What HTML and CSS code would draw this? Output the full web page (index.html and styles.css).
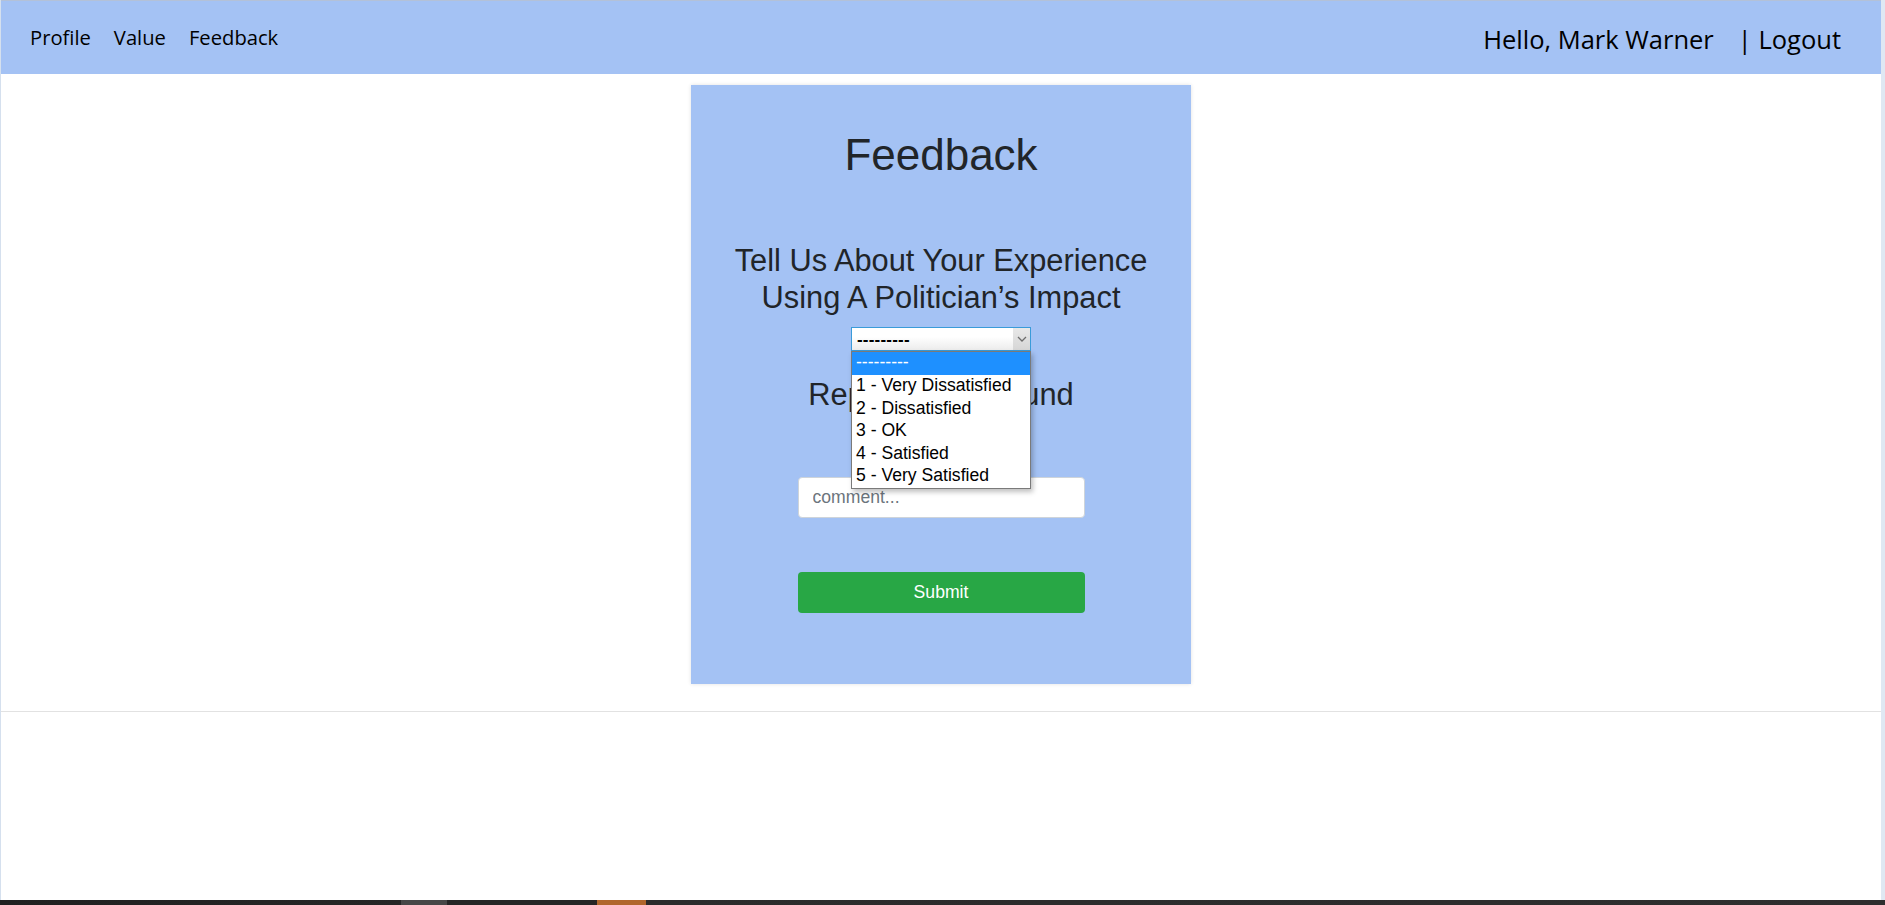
FILE: index.html
```html
<!DOCTYPE html>
<html lang="en">
<head>
<meta charset="utf-8">
<title>Feedback</title>
<link rel="stylesheet" href="styles.css">
</head>
<body>
<div class="screen">
  <div class="window">
    <div class="page">
      <nav class="topnav">
        <div class="nav-left">
          <a class="nav-link" href="#">Profile</a>
          <a class="nav-link" href="#">Value</a>
          <a class="nav-link" href="#">Feedback</a>
        </div>
        <div class="nav-right">
          <span class="greeting">Hello, Mark Warner</span>
          <a class="logout" href="#">| Logout</a>
        </div>
      </nav>
      <main class="main">
        <form class="card">
          <h1 class="card-title">Feedback</h1>
          <h2 class="question">Tell Us About Your Experience<br>Using A Politician’s Impact</h2>
          <div class="select-wrap">
            <div class="select select-open">
              <span class="select-value">---------</span>
              <span class="select-arrow">
                <svg width="10" height="6" viewBox="0 0 10 6"><path d="M1 1 L5 5 L9 1" fill="none" stroke="#6d6d6d" stroke-width="1.3"/></svg>
              </span>
            </div>
            <ul class="listbox">
              <li class="option option-active">---------</li>
              <li class="option">1 - Very Dissatisfied</li>
              <li class="option">2 - Dissatisfied</li>
              <li class="option">3 - OK</li>
              <li class="option">4 - Satisfied</li>
              <li class="option">5 - Very Satisfied</li>
            </ul>
          </div>
          <h2 class="question question-two">Report Background</h2>
          <div class="select select-plain">
            <span class="select-value">---------</span>
            <span class="select-arrow">
              <svg width="10" height="6" viewBox="0 0 10 6"><path d="M1 1 L5 5 L9 1" fill="none" stroke="#6d6d6d" stroke-width="1.3"/></svg>
            </span>
          </div>
          <input class="comment" type="text" placeholder="comment...">
          <button class="submit" type="button">Submit</button>
        </form>
      </main>
      <div class="rule"></div>
      <div class="filler"></div>
    </div>
    <div class="scroll-strip"></div>
  </div>
  <div class="taskbar"></div>
</div>
</body>
</html>
```

FILE: styles.css
```css
* { box-sizing: border-box; }

html, body {
  margin: 0;
  padding: 0;
  background: #ffffff;
}

.screen {
  width: 1885px;
  height: 905px;
  display: flex;
  flex-direction: column;
  overflow: hidden;
}

.window {
  flex: 1;
  display: flex;
  min-height: 0;
}

.page {
  flex: 1;
  display: flex;
  flex-direction: column;
  border-left: 1px solid #d5e0ee;
  background: #ffffff;
}

.scroll-strip {
  width: 4px;
  background: #dfe8f3;
}

.taskbar {
  height: 5px;
  background: linear-gradient(to right,
    #202020 0, #262626 401px,
    #474747 401px, #474747 447px,
    #252525 447px, #252525 597px,
    #b0662c 597px, #b0662c 646px,
    #2b2b2b 646px, #2e2e2e 100%);
}

/* ---------- navigation ---------- */
.topnav {
  height: 74px;
  background: #a4c2f4;
  border-top: 1px solid #b3c1d8;
  display: flex;
  align-items: center;
  justify-content: space-between;
  padding: 0 40px 0 29px;
  font-family: "Open Sans", "Noto Sans", sans-serif;
}

.nav-left {
  display: flex;
  gap: 23px;
  margin-top: -1px;
}

.nav-link {
  color: #000;
  text-decoration: none;
  font-size: 20.2px;
}

.nav-right {
  display: flex;
  gap: 24px;
  font-size: 25.5px;
  color: #000;
  margin-top: 2px;
}

.logout {
  color: #000;
  text-decoration: none;
}

/* ---------- card ---------- */
.main {
  padding-top: 11px;
  display: flex;
  justify-content: center;
}

.card {
  width: 500px;
  height: 599px;
  background: #a4c2f4;
  box-shadow: 0 0 4px rgba(0, 0, 0, 0.12);
  display: flex;
  flex-direction: column;
  align-items: center;
  padding-top: 43px;
  font-family: "Liberation Sans", Arial, sans-serif;
  color: #212529;
  margin: 0;
}

.card-title {
  margin: 0;
  font-size: 44px;
  font-weight: 400;
  line-height: 53px;
}

.question {
  margin: 61px 0 0;
  font-size: 30.8px;
  font-weight: 400;
  line-height: 37px;
  text-align: center;
}

.question-two {
  margin-top: 25px;
}

.select-wrap {
  position: relative;
  margin-top: 11px;
  width: 180px;
  height: 24px;
}

.select {
  width: 180px;
  height: 24px;
  display: flex;
  align-items: stretch;
  background: linear-gradient(#ffffff 40%, #ececec);
  font-family: "Liberation Sans", Arial, sans-serif;
  font-size: 17px;
  color: #000;
}

.select-open {
  border: 1px solid #3a9bd9;
}

.select-plain {
  border: 1px solid #a6a6a6;
  margin-top: 11px;
}

.select-value {
  flex: 1;
  padding-left: 5px;
  line-height: 24px;
  font-weight: 700;
  letter-spacing: 0.2px;
}

.select-arrow {
  width: 17px;
  background: linear-gradient(#e8e8e8, #d6d6d6);
  display: flex;
  align-items: center;
  justify-content: center;
}

.listbox {
  position: absolute;
  top: 24px;
  left: 0;
  width: 180px;
  margin: 0;
  padding: 0;
  list-style: none;
  background: #ffffff;
  border: 1px solid #7a7a7a;
  box-shadow: 2px 3px 5px rgba(0, 0, 0, 0.25);
  z-index: 5;
}

.option {
  height: 22.6px;
  line-height: 21.6px;
  padding-left: 4px;
  font-size: 17.6px;
  color: #000;
  white-space: nowrap;
}

.option-active {
  height: 23px;
  background: #1e90ff;
  color: #ffffff;
}

.comment {
  margin-top: 29px;
  width: 287px;
  height: 41px;
  border: 1px solid #ced4da;
  border-radius: 4px;
  background: #ffffff;
  padding: 0 14px;
  font-family: "Liberation Sans", Arial, sans-serif;
  font-size: 17.6px;
  color: #495057;
  outline: none;
}

.comment::placeholder {
  color: #6c757d;
}

.submit {
  margin-top: 54px;
  width: 287px;
  height: 41px;
  border: 0;
  border-radius: 4px;
  background: #28a745;
  color: #ffffff;
  font-family: "Liberation Sans", Arial, sans-serif;
  font-size: 17.6px;
}

/* ---------- lower page ---------- */
.rule {
  margin-top: 27px;
  height: 1px;
  background: #e2e2e2;
}

.filler {
  flex: 1;
}
```
